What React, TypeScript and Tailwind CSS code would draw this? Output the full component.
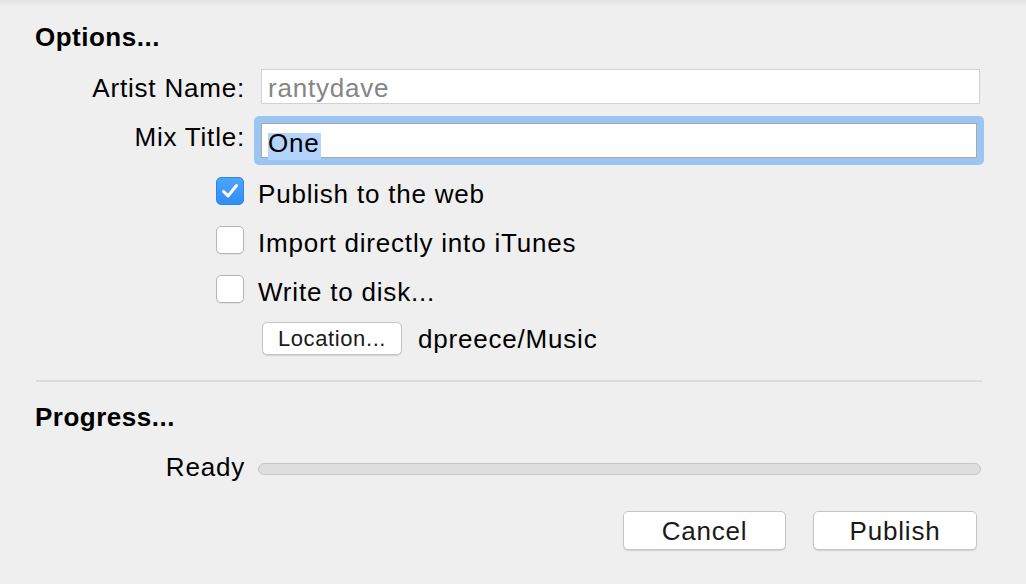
import React from "react";

function Checkbox({ checked }: { checked?: boolean }) {
  if (checked) {
    return (
      <div className="w-[28px] h-[28px] rounded-[5px] bg-[linear-gradient(to_bottom,#4ea4fa,#2f8ef5)] border border-[#2c86ea] flex items-center justify-center shrink-0">
        <svg width="18" height="16" viewBox="0 0 18 16" fill="none">
          <path d="M2.5 8.5 L7 13 L15.5 2.5" stroke="white" strokeWidth="3" strokeLinecap="round" strokeLinejoin="round" />
        </svg>
      </div>
    );
  }
  return (
    <div className="w-[28px] h-[28px] rounded-[5px] bg-white border border-[#b5b5b5] shadow-[0_1px_0_rgba(0,0,0,0.05)] shrink-0" />
  );
}

export default function App() {
  return (
    <div
      className="w-[1026px] h-[584px] bg-[linear-gradient(to_bottom,#e4e4e4_0px,#efefef_7px,#efefef_100%)] text-[26px] leading-[30px] tracking-[0.8px] text-black overflow-hidden"
      style={{ fontFamily: '"Helvetica Neue", Helvetica, "Liberation Sans", Arial, sans-serif' }}
    >
      <div className="pl-[35px] pt-[22px] flex flex-col">
        {/* Options heading */}
        <div className="font-bold tracking-[0.5px] h-[30px]">Options...</div>

        {/* Artist name */}
        <div className="flex items-start mt-[17px]">
          <div className="w-[210px] text-right mt-[4px]">Artist Name:</div>
          <div className="ml-[16px] w-[719px] h-[35px] bg-white border border-[#d2d2d2] pl-[6px] pt-[3px] text-[#858585]">
            rantydave
          </div>
        </div>

        {/* Mix title */}
        <div className="flex items-start mt-[12px]">
          <div className="w-[210px] text-right mt-[6px]">Mix Title:</div>
          <div className="ml-[9px] w-[730px] h-[49px] rounded-[5px] bg-[#9cc5f4] p-[7px]">
            <div className="w-[716px] h-[35px] bg-white border border-[#a9a9a9] pl-[6px] pt-[4px]">
              <span className="inline-block h-[27px] leading-[20px] bg-[#b3d4fc] pr-[1px]">One</span>
            </div>
          </div>
        </div>

        {/* Checkboxes */}
        <div className="flex flex-col gap-[17px] mt-[12px] pl-[181px]">
          <div className="flex items-start gap-[14px]">
            <Checkbox checked />
            <div className="mt-[2px]">Publish to the web</div>
          </div>
          <div className="flex items-start gap-[14px]">
            <Checkbox />
            <div className="mt-[2px]">Import directly into iTunes</div>
          </div>
          <div className="flex items-start gap-[14px]">
            <Checkbox />
            <div className="mt-[2px]">Write to disk...</div>
          </div>
        </div>

        {/* Location */}
        <div className="flex items-center mt-[15px] pl-[227px] h-[33px]">
          <button className="w-[140px] h-[33px] rounded-[5px] bg-white border border-[#c6c6c6] shadow-[0_1px_1px_rgba(0,0,0,0.12)] text-[22px] leading-[26px] tracking-[0.6px] text-[#1a1a1a] flex items-center justify-center">
            Location...
          </button>
          <div className="ml-[16px]">dpreece/Music</div>
        </div>

        {/* Separator */}
        <div className="mt-[25px] ml-[1px] w-[946px] h-[2px] bg-[#dcdcdc]" />

        {/* Progress heading */}
        <div className="font-bold tracking-[0.5px] h-[30px] mt-[20px]">Progress...</div>

        {/* Ready row */}
        <div className="flex items-center mt-[20px] h-[30px]">
          <div className="w-[210px] text-right">Ready</div>
          <div className="ml-[13px] w-[723px] h-[12px] rounded-full bg-[#dedede] border border-[#c8c8c8] mt-[4px]" />
        </div>

        {/* Buttons */}
        <div className="flex justify-end gap-[27px] mt-[29px] pr-[49px]">
          <button className="w-[163px] h-[39px] rounded-[5px] bg-white border border-[#c6c6c6] shadow-[0_1px_1px_rgba(0,0,0,0.12)] text-[#1a1a1a] flex items-center justify-center">
            Cancel
          </button>
          <button className="w-[164px] h-[39px] rounded-[5px] bg-white border border-[#c6c6c6] shadow-[0_1px_1px_rgba(0,0,0,0.12)] text-[#1a1a1a] flex items-center justify-center">
            Publish
          </button>
        </div>
      </div>
    </div>
  );
}
